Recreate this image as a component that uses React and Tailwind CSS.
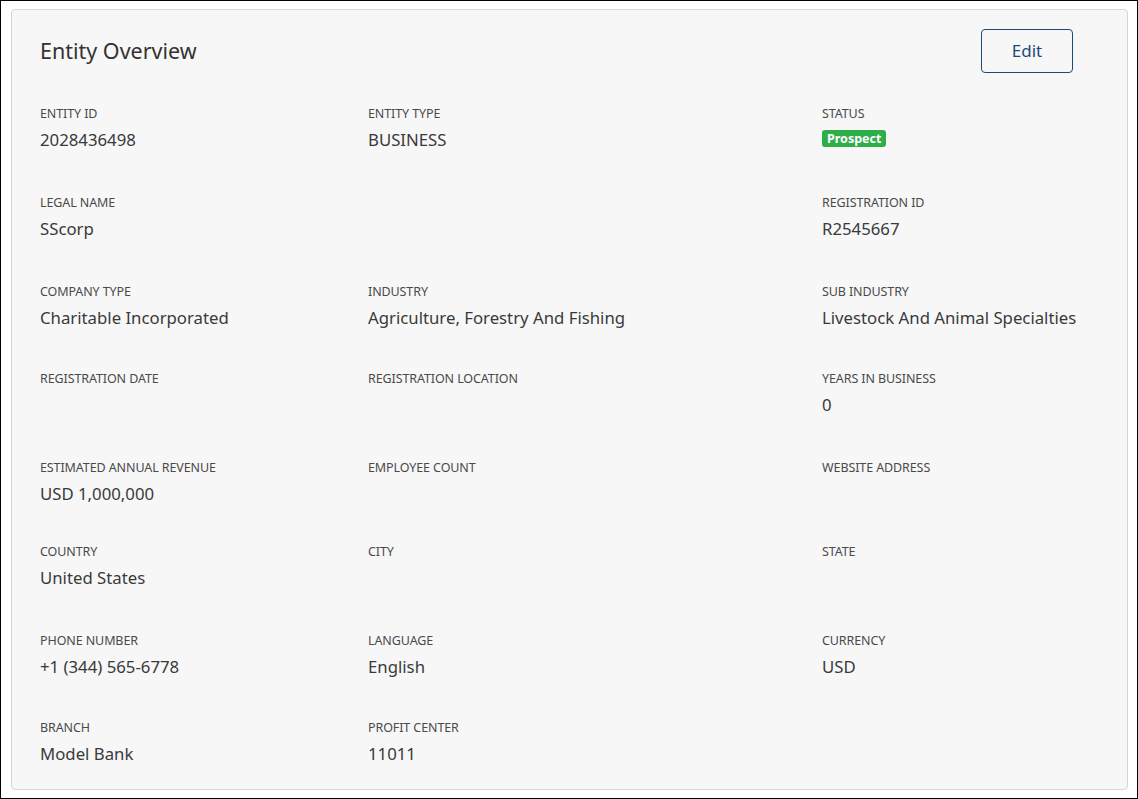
const rows = [
  {
    h: 'h-[89px]',
    cells: [
      { label: 'ENTITY ID', value: '2028436498' },
      { label: 'ENTITY TYPE', value: 'BUSINESS' },
      { label: 'STATUS', badge: 'Prospect' },
    ],
  },
  {
    h: 'h-[89px]',
    cells: [
      { label: 'LEGAL NAME', value: 'SScorp' },
      null,
      { label: 'REGISTRATION ID', value: 'R2545667' },
    ],
  },
  {
    h: 'h-[87px]',
    cells: [
      { label: 'COMPANY TYPE', value: 'Charitable Incorporated' },
      { label: 'INDUSTRY', value: 'Agriculture, Forestry And Fishing' },
      { label: 'SUB INDUSTRY', value: 'Livestock And Animal Specialties' },
    ],
  },
  {
    h: 'h-[89px]',
    cells: [
      { label: 'REGISTRATION DATE' },
      { label: 'REGISTRATION LOCATION' },
      { label: 'YEARS IN BUSINESS', value: '0' },
    ],
  },
  {
    h: 'h-[84px]',
    cells: [
      { label: 'ESTIMATED ANNUAL REVENUE', value: 'USD 1,000,000' },
      { label: 'EMPLOYEE COUNT' },
      { label: 'WEBSITE ADDRESS' },
    ],
  },
  {
    h: 'h-[89px]',
    cells: [
      { label: 'COUNTRY', value: 'United States' },
      { label: 'CITY' },
      { label: 'STATE' },
    ],
  },
  {
    h: 'h-[87px]',
    cells: [
      { label: 'PHONE NUMBER', value: '+1 (344) 565-6778' },
      { label: 'LANGUAGE', value: 'English' },
      { label: 'CURRENCY', value: 'USD' },
    ],
  },
  {
    h: 'h-[50px]',
    cells: [
      { label: 'BRANCH', value: 'Model Bank' },
      { label: 'PROFIT CENTER', value: '11011' },
      null,
    ],
  },
];

const Field = ({ cell }) => {
  if (!cell) return <div />;
  return (
    <div className="flex flex-col whitespace-nowrap">
      <span className="text-[12.5px] leading-[16px] tracking-[-0.1px] text-[#4a4a4a]">{cell.label}</span>
      {cell.value && (
        <span className="mt-[7px] text-[16.75px] leading-[22px] text-[#3a3a3a]">{cell.value}</span>
      )}
      {cell.badge && (
        <span className="mt-[8px] w-fit rounded-[3px] bg-[#2eae48] px-[5px] text-[12.5px] font-bold leading-[17px] text-white">
          {cell.badge}
        </span>
      )}
    </div>
  );
};

const App = () => {
  return (
    <div
      className="h-[799px] w-[1138px] border border-black bg-white pb-[8px] pl-[10px] pr-[9px] pt-[8px]"
      style={{ fontFamily: '"Source Sans Pro", "Noto Sans", Lato, sans-serif' }}
    >
      <div className="h-full rounded-[4px] border border-[#d6d6d6] bg-[#f7f7f7] pl-[28px] pr-[20px] pt-[19px]">
        <div className="mr-[34px] flex items-center justify-between">
          <h2 className="text-[21.5px] leading-[44px] text-[#333]">Entity Overview</h2>
          <button
            type="button"
            className="h-[44px] w-[92px] rounded-[4px] border border-[#1d4b78] text-[17px] text-[#1d4b78]"
          >
            Edit
          </button>
        </div>

        <div className="mt-[33px]">
          {rows.map((row, i) => (
            <div key={i} className={`grid grid-cols-[328px_454px_1fr] ${row.h}`}>
              {row.cells.map((cell, j) => (
                <Field key={j} cell={cell} />
              ))}
            </div>
          ))}
        </div>
      </div>
    </div>
  );
};

export default App;
